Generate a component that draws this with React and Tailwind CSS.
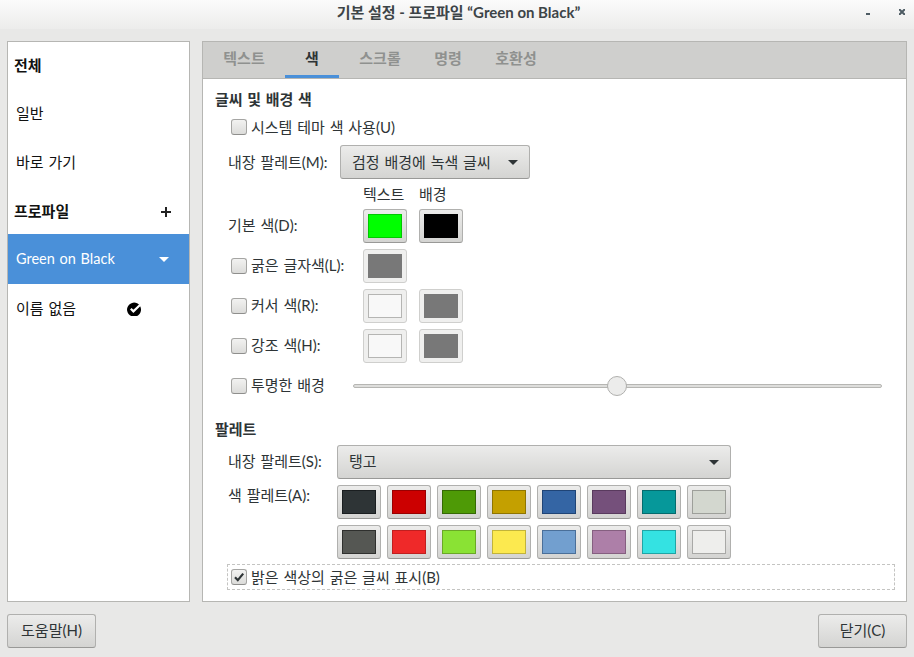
import React from "react";

const font = "font-['Lato','Noto_Sans_CJK_KR',sans-serif]";

const Arrow = ({ className }) => (
  <svg width="10" height="5" viewBox="0 0 10 5" className={className}>
    <path d="M0 0h10L5 5z" fill="currentColor" />
  </svg>
);

const Check = ({ checked }) => (
  <span className="flex h-4 w-4 shrink-0 items-center justify-center rounded-[3px] border border-[#a5a5a3] border-b-[#8e8e8c] bg-gradient-to-b from-[#f2f2f1] to-[#dcdcda] shadow-[0_1px_0_rgba(255,255,255,0.6)]">
    {checked && (
      <svg width="12" height="12" viewBox="0 0 12 12">
        <path d="M2 6.2l2.8 3L10.2 2.6" fill="none" stroke="#2e3436" strokeWidth="2.2" />
      </svg>
    )}
  </span>
);

const ColorButton = ({ color, line, disabled }) => (
  <div
    className={`flex h-[34px] w-[44px] shrink-0 items-center justify-center rounded-[3px] border ${
      disabled
        ? "border-[#cfcfcd] bg-[#efefee]"
        : "border-[#b0b0ae] border-b-[#999997] bg-gradient-to-b from-[#ececeb] to-[#d4d4d2]"
    }`}
  >
    <div className="h-6 w-[34px] border" style={{ backgroundColor: color, borderColor: line || color }} />
  </div>
);

const Combo = ({ label, width, textClass = "" }) => (
  <div
    className={`flex h-[34px] items-center justify-between rounded-[3px] border border-[#b0b0ae] border-b-[#999997] bg-gradient-to-b from-[#ececeb] to-[#d4d4d2] pl-[11px] pr-[11px] text-[#2e3436] ${width}`}
  >
    <span className={textClass}>{label}</span>
    <Arrow className="text-[#2e3436]" />
  </div>
);

const SideRow = ({ children, className = "" }) => (
  <div className={`flex h-12 items-center pl-2 text-[#111] ${className}`}>{children}</div>
);

const CheckRow = ({ label, children }) => (
  <div className="flex h-[34px] items-center">
    <div className="flex w-[148px] items-center gap-[4px] pl-[16px]">
      <Check />
      <span className="whitespace-nowrap pb-[2px]">{label}</span>
    </div>
    {children}
  </div>
);

const palette1 = [
  ["#2e3436", "#1a1e20"],
  ["#cc0000", "#990000"],
  ["#4e9a06", "#356904"],
  ["#c4a000", "#8f7500"],
  ["#3465a4", "#1f4476"],
  ["#75507b", "#593a5e"],
  ["#06989a", "#046b6d"],
  ["#d3d7cf", "#9d9f9a"],
];
const palette2 = [
  ["#555753", "#2f302e"],
  ["#ef2929", "#c01f1f"],
  ["#8ae234", "#6aa826"],
  ["#fce94f", "#c2b33a"],
  ["#729fcf", "#4a6f99"],
  ["#ad7fa8", "#855f80"],
  ["#34e2e2", "#1fa5a5"],
  ["#eeeeec", "#a8a8a6"],
];

const tabs = ["텍스트", "색", "스크롤", "명령", "호환성"];
const tabWidths = ["w-[82px]", "w-[54px]", "w-[82px]", "w-[54px]", "w-[82px]"];

export default function App() {
  return (
    <div className={`flex h-[657px] w-[914px] flex-col overflow-hidden bg-[#e8e8e7] text-[15px] text-[#2e3436] [word-spacing:1px] ${font}`}>
      {/* titlebar */}
      <div className="relative flex h-[29px] shrink-0 items-center justify-center bg-gradient-to-b from-[#fbfbfb] to-[#ececeb] pb-[5px] pl-[3px] font-bold text-[#3d4447]">
        <span className="[word-spacing:0]">기본 설정 - 프로파일 “Green on Black”</span>
        <div className="absolute right-[44px] top-[13px] h-[2px] w-1 bg-[#4d5b63]" />
        <svg width="6" height="6" viewBox="0 0 6 6" className="absolute right-[9px] top-[9px]">
          <path d="M0 0l6 6M6 0L0 6" stroke="#4d5b63" strokeWidth="2" />
        </svg>
      </div>

      <div className="flex h-[573px] gap-3 px-[7px] pt-3">
        {/* sidebar */}
        <div className="h-[561px] w-[183px] shrink-0 border border-[#b6b6b3] bg-white">
          <SideRow className="!pl-[6px] pb-[2px] font-bold">전체</SideRow>
          <SideRow className="pb-[2px]">일반</SideRow>
          <SideRow className="pt-[1px]">바로 가기</SideRow>
          <SideRow className="justify-between !pl-[6px] pr-[18px] pt-[3px] font-bold">
            <span>프로파일</span>
            <svg width="10" height="10" viewBox="0 0 10 10">
              <path d="M5 0v10M0 5h10" stroke="#222" strokeWidth="2" />
            </svg>
          </SideRow>
          <SideRow className="!h-[50px] justify-between bg-[#4a90d9] pr-5 !text-white">
            <span className="text-[14.5px]">Green on Black</span>
            <Arrow className="text-white" />
          </SideRow>
          <SideRow className="!h-[50px]">
            <span className="w-[111px] pb-[2px]">이름 없음</span>
            <svg width="14" height="14" viewBox="0 0 14 14">
              <path d="M13.6 5.2A7 7 0 1 0 14 7z" fill="#000" />
              <path d="M3.8 6.8l2.6 2.6L13 3" fill="none" stroke="#fff" strokeWidth="2.2" />
            </svg>
          </SideRow>
        </div>

        {/* notebook */}
        <div className="h-[561px] w-[705px] shrink-0 border border-[#b6b6b3] bg-white">
          <div className="flex h-[37px] items-stretch border-b border-[#b6b6b3] bg-[#cfcfcd] font-bold text-[#8f918f]">
            {tabs.map((t, i) => (
              <div
                key={t}
                className={`flex items-center justify-center ${tabWidths[i]} ${
                  i === 1 ? "border-b-[3px] border-[#4a90d9] text-[#2e3436]" : "pb-[3px]"
                }`}
              >
                {t}
              </div>
            ))}
          </div>

          <div className="pl-3 pt-[11px]">
            <div className="flex h-5 items-center pb-[2px] font-bold">글씨 및 배경 색</div>
            <div className="mt-[7px] flex h-5 items-center gap-[4px] pl-4">
              <Check />
              <span>시스템 테마 색 사용(U)</span>
            </div>
            <div className="mt-2 flex h-[34px] items-center pl-[13px]">
              <span className="w-[112px]">내장 팔레트(M):</span>
              <Combo label="검정 배경에 녹색 글씨" width="w-[190px]" />
            </div>
            <div className="mt-1 flex h-[26px] items-center pb-1 pl-[148px]">
              <span className="w-[56px]">텍스트</span>
              <span>배경</span>
            </div>
            <div className="flex flex-col gap-[6px]">
              <div className="flex h-[34px] items-center pl-[13px]">
                <span className="w-[135px] pb-[2px]">기본 색(D):</span>
                <div className="flex gap-3">
                  <ColorButton color="#00ff00" line="#00c800" />
                  <ColorButton color="#000000" />
                </div>
              </div>
              <CheckRow label="굵은 글자색(L):">
                <ColorButton color="#787878" disabled />
              </CheckRow>
              <CheckRow label="커서 색(R):">
                <div className="flex gap-3">
                  <ColorButton color="#f8f8f8" line="#b5b5b3" disabled />
                  <ColorButton color="#787878" disabled />
                </div>
              </CheckRow>
              <CheckRow label="강조 색(H):">
                <div className="flex gap-3">
                  <ColorButton color="#f8f8f8" line="#b5b5b3" disabled />
                  <ColorButton color="#787878" disabled />
                </div>
              </CheckRow>
            </div>
            <div className="mt-[6px] flex h-[34px] items-center pl-4">
              <Check />
              <span className="ml-[4px] w-[102px] pb-[2px]">투명한 배경</span>
              <div className="relative h-1 w-[529px] rounded-full border border-[#b6b6b3] bg-[#dededc]">
                <div className="absolute left-[253px] top-[-9px] h-5 w-5 rounded-full border border-[#b0b0ae] bg-[#ececeb]" />
              </div>
            </div>

            <div className="mt-4 flex h-5 items-center pt-[1px] font-bold">팔레트</div>
            <div className="mt-[6px] flex h-[34px] items-center pl-[13px]">
              <span className="w-[109px] pb-[2px]">내장 팔레트(S):</span>
              <Combo label="탱고" width="w-[394px]" textClass="pb-[2px]" />
            </div>
            <div className="mt-[6px] flex pl-[13px]">
              <span className="w-[109px] -mt-[1px]">색 팔레트(A):</span>
              <div className="flex flex-col gap-[6px]">
                {[palette1, palette2].map((row, r) => (
                  <div key={r} className="flex gap-[6px]">
                    {row.map(([c, l]) => (
                      <ColorButton key={c} color={c} line={l} />
                    ))}
                  </div>
                ))}
              </div>
            </div>
            <div className="ml-3 mt-[5px] flex h-[26px] w-[668px] items-center gap-[4px] border border-dashed border-[#c4c4c2] pl-[3px]">
              <Check checked />
              <span>밝은 색상의 굵은 글씨 표시(B)</span>
            </div>
          </div>
        </div>
      </div>

      {/* footer */}
      <div className="flex flex-1 items-start justify-between px-[7px] pt-3">
        <button className="h-[34px] w-[89px] rounded-[3px] border border-[#b0b0ae] border-b-[#999997] bg-gradient-to-b from-[#ececeb] to-[#d4d4d2] pb-[2px] text-[#2e3436]">
          도움말(H)
        </button>
        <button className="h-[34px] w-[89px] rounded-[3px] border border-[#b0b0ae] border-b-[#999997] bg-gradient-to-b from-[#ececeb] to-[#d4d4d2] pb-[2px] text-[#2e3436]">
          닫기(C)
        </button>
      </div>
    </div>
  );
}
